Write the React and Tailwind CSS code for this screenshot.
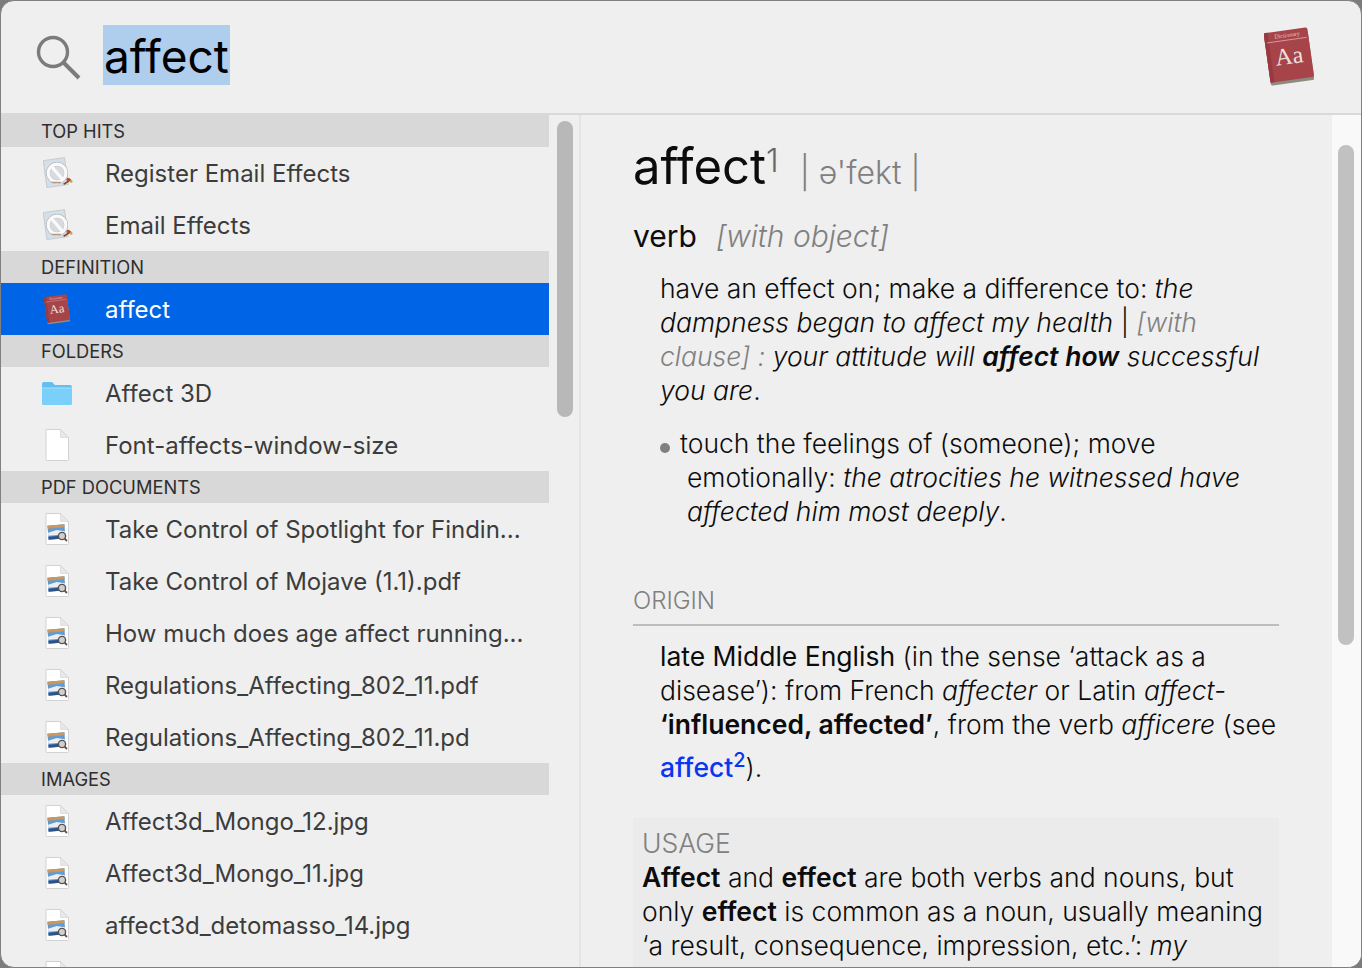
const FONT = "font-['Inter','Liberation_Sans',sans-serif]";

const DictIcon = ({ className }) => (
  <svg viewBox="0 0 50 60" className={className}>
    <g transform="rotate(-8 25 30)">
      <rect x="3" y="7" width="44" height="50" rx="2" fill="#8f8a80" />
      <rect x="3" y="4" width="44" height="50" rx="2" fill="#a6444a" />
      <rect x="3" y="4" width="4" height="50" fill="#98393f" />
      <line x1="5" y1="14" x2="45" y2="14" stroke="#d9a9aa" strokeWidth="0.8" />
      <text x="26" y="11" textAnchor="middle" fontSize="6" fill="#e6c8c8" fontFamily="Liberation Serif, serif">Dictionary</text>
      <text x="25" y="38" textAnchor="middle" fontSize="24" fill="#ece0de" fontFamily="Liberation Serif, serif">Aa</text>
    </g>
  </svg>
);

const PrefIcon = () => (
  <svg viewBox="0 0 32 34" className="w-[30px] h-[32px] ml-[2px]">
    <g transform="rotate(-8 14 16)">
      <rect x="2" y="2" width="23" height="29" fill="#d5dfe8" stroke="#bfc4c9" strokeWidth="0.8" />
    </g>
    <circle cx="15" cy="17" r="9.5" fill="none" stroke="#a9adb0" strokeWidth="4.4" />
    <circle cx="15" cy="17" r="9.5" fill="#d9d9d9" fillOpacity="0.6" stroke="#fafafa" strokeWidth="3.4" />
    <line x1="9" y1="10" x2="21" y2="24" stroke="#fafafa" strokeWidth="3.4" />
    <line x1="22" y1="29" x2="30" y2="24" stroke="#7a4a34" strokeWidth="1.6" />
    <circle cx="27" cy="24" r="2" fill="#b84a3a" />
    <circle cx="30" cy="26" r="1.5" fill="#d8a040" />
    <line x1="9" y1="27" x2="19" y2="27" stroke="#b89880" strokeWidth="1.2" />
  </svg>
);

const FolderIcon = () => (
  <svg viewBox="0 0 32 26" className="w-[32px] h-[26px]">
    <path d="M1 4a2 2 0 0 1 2-2h8l3 3h15a2 2 0 0 1 2 2v16a2 2 0 0 1-2 2H3a2 2 0 0 1-2-2z" fill="#63bff3" />
    <path d="M1 8h30v15a2 2 0 0 1-2 2H3a2 2 0 0 1-2-2z" fill="#7bd0fb" />
    <path d="M1 8h30" stroke="#a9e0fc" strokeWidth="1" />
  </svg>
);

const DocShape = ({ children }) => (
  <svg viewBox="0 0 26 34" className="w-[26px] h-[34px]">
    <path d="M2 1.5h14.5l8 8v22a1 1 0 0 1-1 1H3a1 1 0 0 1-1-1z" fill="#fff" stroke="#d2d2d2" strokeWidth="1" />
    <path d="M16.5 1.5v8h8z" fill="#e8e8e8" stroke="#d2d2d2" strokeWidth="0.6" />
    {children}
  </svg>
);

const FileIcon = () => <DocShape />;

const PictureDocIcon = () => (
  <DocShape>
    <g transform="rotate(-5 12 20)">
      <rect x="4" y="13" width="17" height="14" fill="#5f9bd4" />
      <path d="M4 13h17v3H4z" fill="#c9985a" />
      <path d="M4 20l9-2 8 2v3H4z" fill="#eceef4" />
      <path d="M4 24h14v3H4z" fill="#2f5288" />
    </g>
    <circle cx="18" cy="24" r="3.6" fill="#d0d0d0" stroke="#5a534c" strokeWidth="1.4" />
    <line x1="20.5" y1="26.5" x2="23" y2="29" stroke="#6a5040" strokeWidth="1.8" />
  </DocShape>
);

const SectionHeader = ({ title }) => (
  <div className="h-8 pl-10 flex items-center bg-[#d8d8d8] text-[18.3px] text-[#2e2e2e] leading-none">{title}</div>
);

const Row = ({ icon, name, selected }) => (
  <div className={`h-[52px] flex items-center ${selected ? 'bg-[#0064e6] text-white' : 'text-[#3c3c3c]'}`}>
    <div className="w-[104px] pl-10 pr-[32px] flex justify-center shrink-0">{icon}</div>
    <span className="pt-[2px] text-[24px] leading-none whitespace-nowrap">{name}</span>
  </div>
);

const sections = [
  { title: 'DEFINITION', rows: [{ name: 'affect', icon: <DictIcon className="w-[26px] h-[32px]" />, selected: true }] },
  {
    title: 'FOLDERS',
    rows: [
      { name: 'Affect 3D', icon: <FolderIcon /> },
      { name: 'Font-affects-window-size', icon: <FileIcon /> },
    ],
  },
  {
    title: 'PDF DOCUMENTS',
    rows: [
      'Take Control of Spotlight for Findin...',
      'Take Control of Mojave (1.1).pdf',
      'How much does age affect running...',
      'Regulations_Affecting_802_11.pdf',
      'Regulations_Affecting_802_11.pd',
    ].map((name) => ({ name, icon: <PictureDocIcon /> })),
  },
  {
    title: 'IMAGES',
    rows: [
      'Affect3d_Mongo_12.jpg',
      'Affect3d_Mongo_11.jpg',
      'affect3d_detomasso_14.jpg',
      '',
    ].map((name) => ({ name, icon: <PictureDocIcon /> })),
  },
];

export default function App() {
  return (
    <div className={`w-[1362px] h-[968px] bg-[#7c7c7c] overflow-hidden ${FONT}`}>
      <div className="h-full flex flex-col bg-[#efefef] border border-[#808080] rounded-[14px] overflow-hidden">
        {/* Search bar */}
        <header className="h-[112px] shrink-0 flex items-center pl-[34px] pr-[47px] border-b-2 border-[#d9d9d9] box-content">
          <svg viewBox="0 0 46 46" className="w-[46px] h-[46px] shrink-0">
            <circle cx="18" cy="18" r="14.5" fill="none" stroke="#7b7b7b" strokeWidth="3.4" />
            <line x1="28.5" y1="28.5" x2="44" y2="44" stroke="#7b7b7b" strokeWidth="4" />
          </svg>
          <span className="ml-[22px] h-[60px] -mt-[5px] pt-[2px] px-px flex items-center bg-[#afcdec] text-[46px] leading-none text-black">affect</span>
          <DictIcon className="ml-auto -mt-[2px] w-[50px] h-[60px]" />
        </header>

        <div className="flex-1 flex min-h-0">
          {/* Results list */}
          <div className="w-[548px] shrink-0 overflow-hidden">
            <SectionHeader title="TOP HITS" />
            <Row name="Register Email Effects" icon={<PrefIcon />} />
            <Row name="Email Effects" icon={<PrefIcon />} />
            {sections.map((s) => (
              <div key={s.title}>
                <SectionHeader title={s.title} />
                {s.rows.map((r, i) => (
                  <Row key={i} {...r} />
                ))}
              </div>
            ))}
          </div>

          <div className="w-[32px] shrink-0 pt-[6px] pl-2 border-r-2 border-[#e4e4e4]">
            <div className="w-4 h-[296px] rounded-full bg-[#b8b8b8]" />
          </div>

          {/* Dictionary preview */}
          <div className="w-[751px] shrink-0 pl-[52px] pr-[53px] overflow-hidden text-[#0c0c0c] font-light">
            <div className="mt-[22px] h-[60px] flex items-baseline whitespace-nowrap font-normal">
              <span className="text-[49px] leading-[60px]">affect</span>
              <sup className="text-[32px] font-light text-[#666] relative -top-[12px] align-baseline leading-none">1</sup>
              <span className="ml-[21px] text-[32px] font-light text-[#808080]">| ə'fekt |</span>
            </div>
            <div className="mt-[19px] flex items-baseline whitespace-nowrap text-[30px] leading-[40px]">
              <span className="font-normal">verb</span>
              <em className="ml-[19px] text-[#808080]">[with object]</em>
            </div>

            <div className="ml-[27px] mt-[15px] text-[26.5px] leading-[34px] whitespace-nowrap">
              <p>
                have an effect on; make a difference to: <em>the</em>
                <br />
                <em>dampness began to affect my health</em> | <em className="text-[#808080]">[with</em>
                <br />
                <em className="text-[#808080]">clause] :</em> <em>your attitude will <b className="font-semibold">affect how</b> successful</em>
                <br />
                <em>you are</em>.
              </p>
              <p className="mt-[19px]">
                <span className="inline-block w-[10px] h-[10px] rounded-full bg-[#808080] mr-[10px]" />
                touch the feelings of (someone); move
                <br />
                <span className="ml-[27px]">emotionally: <em>the atrocities he witnessed have</em></span>
                <br />
                <span className="ml-[27px]"><em>affected him most deeply</em>.</span>
              </p>
            </div>

            <div className="mt-[56px] pb-[6px] border-b-2 border-[#bdbdbd] text-[24px] leading-[34px] text-[#808080]">ORIGIN</div>

            <div className="ml-[27px] mt-[13px] text-[26.5px] leading-[34px] whitespace-nowrap">
              <p>
                <span className="font-normal">late Middle English</span> (in the sense ‘attack as a
                <br />
                disease’): from French <em>affecter</em> or Latin <em>affect-</em>
                <br />
                <b className="font-semibold">‘influenced, affected’</b>, from the verb <em>afficere</em> (see
              </p>
              <p className="mt-[9px]">
                <span className="font-medium text-[#0a36f0]">affect<sup className="text-[20px] relative -top-[10px] align-baseline leading-none">2</sup></span>).
              </p>
            </div>

            <div className="mt-[34px] h-[160px] px-[9px] pt-[8px] bg-[#ebebeb] text-[26.5px] leading-[34px] whitespace-nowrap">
              <div className="text-[#808080]">USAGE</div>
              <p>
                <b className="font-semibold">Affect</b> and <b className="font-semibold">effect</b> are both verbs and nouns, but
                <br />
                only <b className="font-semibold">effect</b> is common as a noun, usually meaning
                <br />
                ‘a result, consequence, impression, etc.’: <em>my</em>
              </p>
            </div>
          </div>

          <div className="flex-1 pt-[30px] pl-[6px] bg-[#f9f9f9]">
            <div className="w-4 h-[500px] rounded-full bg-[#c1c1c1]" />
          </div>
        </div>
      </div>
    </div>
  );
}
